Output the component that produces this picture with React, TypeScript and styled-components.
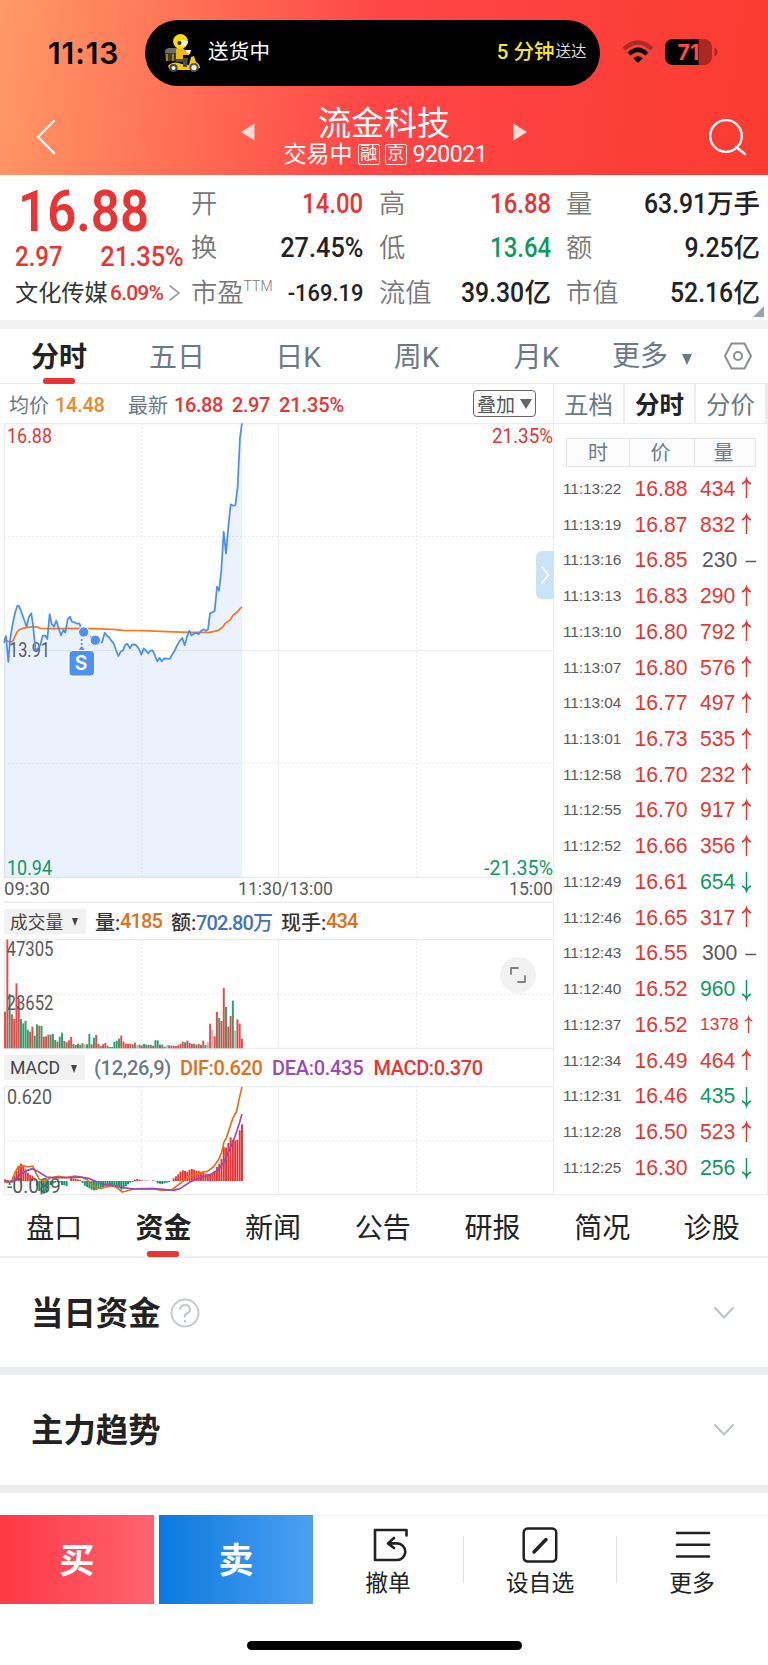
import React from "react";
import styled, { createGlobalStyle } from "styled-components";

const RED = "#ea3433";
const GREEN = "#0f9960";
const SLATE = "#6b7987";
const INK = "#222";
const GREY = "#58595b";
const ORANGE = "#e2701a";
const GRID = "#ececee";

const Global = createGlobalStyle`
  * { box-sizing: border-box; }
  body { margin: 0; background: #fff; }
`;

const Page = styled.div`
  width: 768px;
  height: 1665px;
  display: flex;
  flex-direction: column;
  background: #fff;
  color: ${INK};
  font-family: Roboto, "Noto Sans CJK SC", sans-serif;
  overflow: hidden;
  white-space: nowrap;
  svg { display: block; flex: none; overflow: visible; }
`;

/* ---------- header ---------- */

const Header = styled.header`
  height: 175px;
  flex: none;
  background: linear-gradient(98deg, #ff9a66 0%, #ff4546 49%, #fa3b31 100%);
`;

const StatusBar = styled.div`
  height: 106px;
  padding: 20px 49px 20px 48px;
  display: flex;
  align-items: center;
`;

const Clock = styled.div`
  width: 97px;
  color: #000;
  font: 600 30px Inter, sans-serif;
  letter-spacing: 0.9px;
`;

const Island = styled.div`
  width: 454.5px;
  height: 66px;
  padding: 0 13px 0 19px;
  display: flex;
  align-items: center;
  border-radius: 33px;
  background: #000;
  color: #fff;
  font-size: 20.5px;
  line-height: 30px;
`;

const IslandLabel = styled.span`
  margin: -2px 0 0 7px;
  flex: 1;
  letter-spacing: 0.3px;
`;

const Eta = styled.span`
  margin-top: -2px;
  color: #f8e71c;
  font-weight: 500;
`;

const EtaNote = styled.span`
  margin: -2px 0 0 1px;
  font-size: 15.5px;
  color: #ddd;
`;

const StatusIcons = styled.div`
  display: flex;
  align-items: center;
  gap: 11px;
  margin-left: 22.5px;
  margin-top: -3px;
`;

const NavBar = styled.div`
  height: 60px;
  padding: 0 20px 0 36px;
  display: grid;
  grid-template-columns: 60px 1fr 60px;
  align-items: center;
  color: #fff;
`;

const NavTitle = styled.div`
  display: grid;
  grid-template-columns: 14px 246px 14px;
  justify-content: center;
  gap: 6px;
  margin-left: -16px;
`;

const StockName = styled.div`
  font-size: 33px;
  font-weight: 400;
  line-height: 36px;
  text-align: center;
`;

const StockMeta = styled.div`
  height: 25px;
  padding-left: 2px;
  display: flex;
  justify-content: center;
  align-items: center;
  font-size: 23px;
  line-height: 25px;
`;

const Tag = styled.span`
  width: 21.5px;
  height: 21px;
  margin-left: 5.5px;
  border: 1.5px solid rgba(255, 255, 255, 0.85);
  border-radius: 2px;
  font-size: 17px;
  line-height: 17px;
  text-align: center;
`;

const Code = styled.span`
  width: 74px;
  margin-left: 6px;
  font-size: 23px;
  letter-spacing: -0.5px;
`;

/* ---------- quote ---------- */

const Quote = styled.section`
  height: 145px;
  flex: none;
  position: relative;
  display: grid;
  grid-template-columns: 191px 172px 16px 172px 15px 194px;
`;

const Condensed = styled.span<{ $scale?: number; $from?: string }>`
  display: inline-block;
  transform: scaleX(${(p) => p.$scale ?? 0.87});
  transform-origin: ${(p) => p.$from ?? "right"} center;
`;

const PriceColumn = styled.div`
  padding: 0 0 0 15px;
  color: ${RED};
  font-weight: 500;
`;

const BigPrice = styled.div`
  height: 62px;
  margin-top: 5px;
  padding-left: 3px;
  font-size: 58px;
  font-weight: 600;
  line-height: 62px;
`;

const Change = styled.div`
  height: 32px;
  width: 168.5px;
  display: flex;
  justify-content: space-between;
  align-items: center;
  font-size: 27px;
  line-height: 32px;
  margin-top: -1px;
`;

const Sector = styled.div`
  height: 30px;
  margin-top: 5px;
  display: flex;
  align-items: center;
  font-size: 21px;
  line-height: 30px;
`;

const SectorName = styled.span`
  width: 95px;
  color: #333;
  font-size: 23.2px;
  font-weight: 400;
`;

const SectorRate = styled.span`
  width: 59px;
  letter-spacing: -0.8px;
`;

const StatColumn = styled.div<{ $start: number }>`
  grid-column: ${(p) => p.$start};
  padding-top: 6.5px;
`;

const Stat = styled.div`
  height: 44.5px;
  display: flex;
  justify-content: space-between;
  align-items: center;
  font-size: 26px;
  line-height: 44px;
`;

const StatLabel = styled.span`
  color: #777;
  font-weight: 350;
  font-size: 26.3px;
  sup {
    font-size: 14px;
    line-height: 0;
    vertical-align: 11px;
  }
`;

const StatValue = styled.span<{ $color?: string; $size?: number }>`
  color: ${(p) => p.$color ?? INK};
  font-weight: 500;
  font-size: ${(p) => p.$size ?? 27.5}px;
  display: flex;
`;

const Unit = styled.span`
  font-size: 26.5px;
`;

const CornerMark = styled.i`
  position: absolute;
  right: 4px;
  bottom: 3px;
  border-left: 11px solid transparent;
  border-bottom: 11px solid #97a3b0;
`;

const Band = styled.div<{ $h: number; $c?: string }>`
  height: ${(p) => p.$h}px;
  flex: none;
  background: ${(p) => p.$c ?? "#f2f2f2"};
`;

/* ---------- period tabs ---------- */

const PeriodTabs = styled.nav`
  height: 55px;
  flex: none;
  display: flex;
  align-items: center;
  border-bottom: 1.5px solid #e9ebec;
  font-size: 28px;
  color: ${SLATE};
`;

const PeriodTab = styled.div<{ $w: number; $on?: boolean }>`
  width: ${(p) => p.$w}px;
  height: 54px;
  display: flex;
  flex-direction: column;
  align-items: center;
  line-height: 58px;
  color: ${(p) => (p.$on ? INK : SLATE)};
  font-weight: ${(p) => (p.$on ? 700 : 400)};
  i { margin-top: -9px; }
`;

const Marker = styled.i`
  width: 32px;
  height: 6px;
  flex: none;
  border-radius: 2.5px;
  background: ${RED};
`;

const MoreTab = styled.div`
  width: 124px;
  height: 54px;
  padding: 1px 0 0 12px;
  display: flex;
  align-items: center;
  gap: 14px;
  line-height: 57px;
  i { margin-top: 5px; }
`;

const Caret = styled.i<{ $w: number; $h: number; $c?: string }>`
  border: ${(p) => p.$w / 2}px solid transparent;
  border-bottom: 0;
  border-top: ${(p) => p.$h}px solid ${(p) => p.$c ?? SLATE};
`;

/* ---------- market area ---------- */

const Market = styled.main`
  height: 811px;
  flex: none;
  display: flex;
`;

const ChartPane = styled.section`
  width: 554px;
  position: relative;
  border-right: 1.5px solid ${GRID};
`;

const InfoRow = styled.div<{ $h: number; $drop?: number }>`
  height: ${(p) => p.$h}px;
  padding-top: ${(p) => p.$drop ?? 0}px;
  display: flex;
  align-items: center;
  font-size: 20px;
  font-weight: 500;
`;

const Seg = styled.span<{ $w: number; $c?: string; $weight?: number; $ls?: number }>`
  width: ${(p) => p.$w}px;
  color: ${(p) => p.$c ?? "#333"};
  font-weight: ${(p) => p.$weight ?? 500};
  letter-spacing: ${(p) => p.$ls ?? 0}px;
`;

const OverlayButton = styled.div`
  width: 63px;
  height: 27px;
  margin: -2px 17px 0 auto;
  display: flex;
  align-items: center;
  justify-content: center;
  gap: 5px;
  border: 1.5px solid #666;
  border-radius: 4px;
  color: #555;
  font-size: 19px;
  font-weight: 400;
`;

const Picker = styled.div<{ $w: number }>`
  width: ${(p) => p.$w}px;
  height: 25px;
  margin: 0 9px 0 4px;
  padding: 0 8px 0 6px;
  display: flex;
  align-items: center;
  justify-content: space-between;
  background: #f2f2f2;
  color: #444;
  font-size: 17.7px;
  font-weight: 400;
  i { margin-top: 2px; }
`;

const CollapseHandle = styled.div`
  position: absolute;
  left: 536px;
  top: 167px;
  width: 18px;
  height: 48px;
  display: flex;
  align-items: center;
  justify-content: center;
  border-radius: 6px 0 0 6px;
  background: #cbe2f8;
`;

const ExpandButton = styled.div`
  position: absolute;
  left: 500px;
  top: 573px;
  width: 36px;
  height: 36px;
  display: flex;
  align-items: center;
  justify-content: center;
  border-radius: 50%;
  background: #f2f2f2;
`;

/* ---------- tick pane ---------- */

const TickPane = styled.aside`
  width: 214px;
  border-right: 1.5px solid ${GRID};
  border-bottom: 1.5px solid ${GRID};
`;

const TickTabs = styled.div`
  height: 40px;
  display: grid;
  grid-template-columns: 71px 71px 71px;
  border-bottom: 1.5px solid ${GRID};
`;

const TickTab = styled.div<{ $on?: boolean }>`
  border-right: 2px solid ${GRID};
  font-size: 24.5px;
  line-height: 44px;
  height: 39px;
  text-align: center;
  color: ${(p) => (p.$on ? INK : SLATE)};
  font-weight: ${(p) => (p.$on ? 700 : 400)};
`;

const TickHead = styled.div`
  width: 190px;
  height: 29px;
  margin: 14px 0 4px 12px;
  display: grid;
  grid-template-columns: 62px 65px 1fr;
  border: 1px solid #e2e4e6;
  background: #fcfcfd;
  color: ${SLATE};
  font-size: 20px;
  line-height: 28px;
  text-align: center;
  span { padding-right: 3px; height: 27px; }
  span:first-child { padding: 0; }
  span + span { border-left: 1.5px solid #e2e4e6; }
`;

const TickRow = styled.div`
  height: 35.74px;
  padding-left: 9px;
  display: grid;
  grid-template-columns: 71.5px 65.5px 1fr;
  align-items: center;
  font-family: "Liberation Sans", sans-serif;
  font-size: 21.2px;
  color: ${RED};
`;

const TickTime = styled.span`
  color: ${GREY};
  font-size: 15.4px;
  letter-spacing: -0.05px;
`;

const TickVolume = styled.span<{ $dir: Dir; $small: boolean }>`
  display: flex;
  align-items: center;
  gap: ${(p) => (p.$small ? 5 : 6)}px;
  padding-left: ${(p) => (p.$dir === "flat" ? 2 : 0)}px;
  font-size: ${(p) => (p.$small ? 17.4 : 21.2)}px;
  color: ${(p) => (p.$dir === "up" ? RED : p.$dir === "down" ? GREEN : GREY)};
`;

/* ---------- lower sections ---------- */

const DetailTabs = styled.nav`
  height: 63px;
  flex: none;
  display: grid;
  grid-template-columns: 108.6px repeat(6, 109.7px);
  border-bottom: 2px solid #eff0f1;
`;

const DetailTab = styled.div<{ $on?: boolean }>`
  height: 62px;
  display: flex;
  flex-direction: column;
  align-items: center;
  font-size: 28px;
  line-height: 68px;
  font-weight: ${(p) => (p.$on ? 600 : 400)};
  i { margin-top: -12px; }
`;

const Fold = styled.section<{ $h: number }>`
  height: ${(p) => p.$h}px;
  flex: none;
  padding: 0 34px 0 31px;
  display: flex;
  align-items: center;
  justify-content: space-between;
`;

const FoldTitle = styled.h2`
  margin: 0;
  display: flex;
  align-items: center;
  gap: 9px;
  font-size: 32.4px;
  font-weight: 700;
  span { margin-top: -5px; }
`;

const ActionBar = styled.footer`
  height: 90px;
  flex: none;
  margin-top: 22px;
  display: flex;
  border-top: 1px solid #f4f4f5;
`;

const Trade = styled.button<{ $from: string; $to: string }>`
  width: 154px;
  height: 89px;
  margin: -1px 5px 0 0;
  padding: 0 0 4px;
  border: 0;
  background: linear-gradient(90deg, ${(p) => p.$from}, ${(p) => p.$to});
  color: #fff;
  font: 700 35px "Noto Sans CJK SC", sans-serif;
`;

const Action = styled.div<{ $w: number; $nudge?: number }>`
  width: ${(p) => p.$w}px;
  padding-top: 11px;
  display: flex;
  flex-direction: column;
  align-items: center;
  font-size: 22.8px;
  line-height: 38px;
  span { margin-left: ${(p) => p.$nudge ?? 0}px; }
`;

const Divider = styled.i`
  width: 1px;
  height: 47px;
  margin-top: 20px;
  background: #dfe0e2;
`;

const HomeIndicator = styled.div`
  width: 275px;
  height: 9px;
  flex: none;
  margin: 36px auto 0;
  border-radius: 5px;
  background: #000;
`;

/* ---------- data ---------- */

type Dir = "up" | "down" | "flat";

const ticks: [string, string, string, Dir][] = [
  ["11:13:22", "16.88", "434", "up"],
  ["11:13:19", "16.87", "832", "up"],
  ["11:13:16", "16.85", "230", "flat"],
  ["11:13:13", "16.83", "290", "up"],
  ["11:13:10", "16.80", "792", "up"],
  ["11:13:07", "16.80", "576", "up"],
  ["11:13:04", "16.77", "497", "up"],
  ["11:13:01", "16.73", "535", "up"],
  ["11:12:58", "16.70", "232", "up"],
  ["11:12:55", "16.70", "917", "up"],
  ["11:12:52", "16.66", "356", "up"],
  ["11:12:49", "16.61", "654", "down"],
  ["11:12:46", "16.65", "317", "up"],
  ["11:12:43", "16.55", "300", "flat"],
  ["11:12:40", "16.52", "960", "down"],
  ["11:12:37", "16.52", "1378", "up"],
  ["11:12:34", "16.49", "464", "up"],
  ["11:12:31", "16.46", "435", "down"],
  ["11:12:28", "16.50", "523", "up"],
  ["11:12:25", "16.30", "256", "down"],
];

const priceA =
  "12,788 18,768 25,846 30,780 38,732 46,695 52,677 57,678 65,698 72,718 80,741 86,712 94,700 99,735 103,775 107,812 114,805 121,795 128,767 136,767 142,777 149,702 155,732 162,740 169,722 176,745 183,766 190,750 196,758 203,718 210,710 216,726 223,726 230,731 238,730 242,740";
const priceB =
  "306,788 314,758 320,766 327,772 334,782 341,790 348,810 355,828 362,815 369,811 376,794 382,791 390,805 396,794 404,793 410,797 417,807 424,824 431,805 438,812 445,820 451,812 458,811 465,827 472,844 479,833 485,844 493,835 500,836 509,837 516,825 524,812 531,797 538,784 547,774 554,796 561,770 568,752 574,766 581,762 588,758 596,763 603,753 610,748 618,752 624,748 630,700 637,697 644,693 651,620 657,632 664,572 671,455 678,521 685,440 692,373 699,377 706,376 713,320 720,172 726,130";
const average =
  "12,776 18,780 25,785 38,785 50,758 57,750 65,746 80,743 100,740 112,741 122,745 150,746 250,745 340,748 370,751 430,752 500,755 570,757 630,757 655,751 668,742 676,730 690,720 700,705 712,696 720,686 726,681";

const volume =
  "r110 r326 g163 r102 r88 r195 r150 g88 g75 g82 g56 r50 r65 g38 g72 r68 g67 r35 r36 g41 r41 g43 g25 r20 g35 g47 r22 g18 r24 r34 g13 r10 g14 g11 r15 n12 g12 g43 r12 g32 r40 r13 g7 r12 r16 g8 g4 g4 g19 g23 g29 r38 r20 r13 r13 r14 g12 r17 n10 g11 r9 g13 g11 r10 g10 r8 g24 g24 r11 g11 r5 n10 g9 r8 r8 r7 r9 r13 r20 g18 r23 r16 r13 g14 r11 r13 g10 r23 g10 n18 r74 n55 r36 r109 g91 r82 r181 g124 r65 r97 g143 n53 r87 r74 r29"
    .split(" ")
    .map((v) => ({ kind: v[0], size: Number(v.slice(1)) }));

const macd = [
  5, 3, -12, -5, 15, 30, 45, 52, 46, 35, 25, 18, 16, 2, -15, -30, -40, -38, -30, -22, -12, -8, -5, -3, -5, -12, -12,
  -15, 0, 9, 8, 7, 5, 3, -6, -14, -18, -22, -26, -28, -27, -24, -20, -18, -15, -13, -12, -11, -12, -14, -20, -26, -24,
  -16, -10, -5, -3, 4, 6, 4, 2, 1, 1, 1, 0, 2, -1, -7, -8, -9, -7, -5, -3, 0, 8, 14, 20, 28, 32, 30, 28, 34, 36, 34,
  31, 30, 26, 24, 22, 20, 18, 24, 30, 42, 52, 66, 102, 100, 114, 131, 124, 122, 124, 152, 170,
];
const dif =
  "12,754 25,757 35,752 45,728 55,710 70,707 82,711 98,708 107,728 118,748 135,754 150,744 175,739 200,743 225,738 245,741 262,750 275,762 290,774 305,775 320,770 340,768 352,774 367,786 380,783 400,777 430,776 460,776 485,781 515,780 530,768 545,757 565,740 585,733 605,727 622,724 640,711 655,690 665,668 672,636 680,622 690,590 698,566 710,543 718,505 726,471";
const dea =
  "12,754 40,754 60,733 80,722 98,716 115,725 140,741 160,743 200,743 240,741 265,745 290,755 310,763 340,766 370,773 400,777 460,776 490,778 520,781 540,776 570,756 600,744 630,734 655,720 672,697 690,656 705,620 718,580 726,553";

/* ---------- chart drawings ---------- */

const barColor: Record<string, string> = { r: RED, g: GREEN, n: "#b0b0b0" };

function Label(p: { x: number; y: number; w: number; size?: number; fill?: string; children: string }) {
  return (
    <text x={p.x} y={p.y} textLength={p.w} lengthAdjust="spacingAndGlyphs" fontSize={p.size ?? 20} fill={p.fill ?? GREY}>
      {p.children}
    </text>
  );
}

function Grid({ h, rows }: { h: number; rows: [number, boolean][] }) {
  return (
    <g stroke={GRID} strokeWidth="1.2" fill="none">
      <path d={`M4 .7H553M4 ${h - 0.7}H553M4.5 0V${h}M278.5 0V${h}`} />
      <path d={`M141.5 0V${h}M416.5 0V${h}`} strokeDasharray="2 2" />
      {rows.map(([y, dotted]) => (
        <path key={y} d={`M4 ${y}H553`} strokeDasharray={dotted ? "2 2" : undefined} />
      ))}
    </g>
  );
}

function PriceChart() {
  return (
    <svg width="553" height="455" viewBox="0 0 553 455">
      <Grid h={455} rows={[[113.5, true], [227.5, false], [340.5, true]]} />
      <g transform="translate(0 -43) scale(.33333)">
        <polygon points={`12,1493 ${priceA} 251,755 286,780 ${priceB} 726,1493`} fill="#3f82f3" fillOpacity=".1" />
      </g>
      <Label x={9} y={234} w={41}>13.91</Label>
      <g transform="translate(0 -43) scale(.33333)" fill="none" strokeLinejoin="round" strokeWidth="5.2">
        <polyline points={average} stroke="#f47a1c" />
        <polyline points={priceA} stroke="#4a8df8" />
        <polyline points={priceB} stroke="#4a8df8" />
        <path d="M251 755L286 780L306 788M245 765V808" stroke="#4a8df8" strokeDasharray="6 6" />
      </g>
      <g fill="#4f90f3" stroke="#fff" strokeWidth="1">
        <circle cx="83.7" cy="209" r="5.2" />
        <circle cx="95.3" cy="217.2" r="5.2" />
        <path d="M78 228l3.7-5l3.7 5z" stroke="none" />
        <rect x="69" y="227.5" width="25.5" height="25.5" rx="3.5" />
      </g>
      <text x="81.2" y="246.5" textAnchor="middle" fontFamily="Inter, sans-serif" fontSize="19.5" fontWeight="600" fill="#fff">S</text>
      <Label x={7} y={19.5} w={45} fill={RED}>16.88</Label>
      <Label x={492} y={19.5} w={61} fill={RED}>21.35%</Label>
      <Label x={7} y={451.5} w={45} fill={GREEN}>10.94</Label>
      <Label x={484} y={451.5} w={69} fill={GREEN}>-21.35%</Label>
    </svg>
  );
}

function TimeAxis() {
  return (
    <svg width="553" height="25" viewBox="0 0 553 25">
      <Label x={4} y={16.5} w={46} size={18.5}>09:30</Label>
      <Label x={238} y={16.5} w={95} size={18.5}>11:30/13:00</Label>
      <Label x={509} y={16.5} w={44} size={18.5}>15:00</Label>
      <path d="M4 24.3H553" stroke={GRID} strokeWidth="1.3" />
    </svg>
  );
}

function VolumeChart() {
  return (
    <svg width="553" height="110" viewBox="0 0 553 110">
      <Grid h={110} rows={[[55, true]]} />
      {volume.map((v, i) => (
        <rect key={i} x={4.1 + i * 2.278} y={109.3 - v.size / 3} width="1.95" height={v.size / 3} fill={barColor[v.kind]} fillOpacity=".9" />
      ))}
      <Label x={6.5} y={16.5} w={47}>47305</Label>
      <Label x={6.5} y={71} w={47}>23652</Label>
    </svg>
  );
}

function MacdChart() {
  return (
    <svg width="553" height="109" viewBox="0 0 553 109">
      <Grid h={109} rows={[[54.5, true]]} />
      {macd.map((v, i) => (
        <rect key={i} x={4.1 + i * 2.278} y={v > 0 ? 95 - v / 3 : 95} width="1.95" height={Math.abs(v) / 3} fill={v > 0 ? RED : GREEN} />
      ))}
      <Label x={7} y={17.5} w={45}>0.620</Label>
      <Label x={7} y={107} w={54}>-0.089</Label>
      <g transform="translate(0 -156) scale(.33333)" fill="none" strokeWidth="5" strokeLinejoin="round">
        <polyline points={dif} stroke={ORANGE} />
        <polyline points={dea} stroke="#9b48b8" />
      </g>
    </svg>
  );
}

/* ---------- icons ---------- */

const Rider = () => (
  <svg width="37" height="39" viewBox="0 0 37 39">
    <path d="M1 16l3-2h9l1 13H2z" fill="#6b6b6b" />
    <path d="M1 19h12v8H2z" fill="#3d3a30" />
    <path d="M3 20v7M9 20v7" stroke="#d9b41c" strokeWidth="1.2" />
    <path d="M4 32q5-6 14-2l7 1 2-8 3-1 2 6q4 2 4 6l-7 2H6z" fill="#f6c80e" />
    <path d="M12 24h12l-1 9h-4l0-5h-7z" fill="#4a4a4a" />
    <path d="M12 15q5-3 9 1l5 2-1 3-6 0 0 4h-7z" fill="#f0b90e" />
    <path d="M22 16l5 0-1 4-3-1z" fill="#fff" />
    <circle cx="16.500" cy="7.500" r="7.400" fill="#f8d917" />
    <path d="M16 7.500q2-3 8 0l-1 3q-3 3-7 1z" fill="#f4efe0" />
    <circle cx="15.500" cy="9" r="2" fill="#332b10" />
    <circle cx="9.500" cy="34" r="4" fill="#444" />
    <circle cx="9.500" cy="34" r="2" fill="#eee" />
    <circle cx="30" cy="33.500" r="4.600" fill="#555" />
    <circle cx="30" cy="33.500" r="2.600" fill="#f2f2f2" />
  </svg>
);

const Wifi = () => (
  <svg width="32" height="24" viewBox="0 0 32 24" fill="none">
    <path d="M2 9Q16-4 30 9" stroke="#7d211e" strokeOpacity=".65" strokeWidth="4.200" />
    <path d="M7 14Q16 5.500 25 14" stroke="#000" strokeWidth="4.200" />
    <path d="M11.300 18.300Q16 14 20.700 18.300L16 23z" fill="#000" />
  </svg>
);

const Battery = () => (
  <svg width="53" height="26" viewBox="0 0 53 26">
    <rect width="47" height="26" rx="8" fill="#a92824" />
    <path d="M8 0H33.500V26H8A8 8 0 0 1 0 18V8A8 8 0 0 1 8 0z" fill="#000" />
    <path d="M49.500 8.500q3 1 3 4.500t-3 4.500z" fill="#a92824" />
    <text x="23.500" y="20.500" textAnchor="middle" fontFamily="Inter, sans-serif" fontSize="21.500" fontWeight="700" fill="#ff4a45">71</text>
  </svg>
);

const Stroke = (p: { w: number; h: number; d: string; c: string; sw?: number; children?: React.ReactNode }) => (
  <svg width={p.w} height={p.h} viewBox={`0 0 ${p.w} ${p.h}`} fill="none" stroke={p.c} strokeWidth={p.sw ?? 2} strokeLinecap="round" strokeLinejoin="round">
    <path d={p.d} />
    {p.children}
  </svg>
);

const NavTriangle = ({ d }: { d: string }) => (
  <svg width="14" height="18" viewBox="0 0 14 18" fill="#ffdcd8">
    <path d={d} />
  </svg>
);

const NavArrow = styled.div`
  padding-top: 17px;
`;

const arrowPath: Record<Dir, string> = {
  up: "M5.500 20V1M1 6Q4.500 4.500 5.500 1Q6.500 4.500 10 6",
  down: "M5.500 1V20M1 15Q4.500 16.500 5.500 20Q6.500 16.500 10 15",
  flat: "M2.500 11.500H13",
};

const DirectionMark = ({ dir, small }: { dir: Dir; small: boolean }) => (
  <svg width={small ? 10 : 14} height={small ? 18 : 21} viewBox={small ? "0 0 12 21" : "0 0 14 21"} fill="none" stroke="currentColor" strokeWidth="1.500">
    <path d={arrowPath[dir]} />
  </svg>
);

/* ---------- page ---------- */

const stats: { label: React.ReactNode; num: string; unit?: string; color?: string; size?: number; scale?: number }[][] = [
  [
    { label: "开", num: "14.00", color: RED },
    { label: "换", num: "27.45%", scale: 0.92 },
    { label: <>市盈<sup>TTM</sup></>, num: "-169.19", size: 23.5, scale: 0.93 },
  ],
  [
    { label: "高", num: "16.88", color: RED },
    { label: "低", num: "13.64", color: GREEN },
    { label: "流值", num: "39.30", unit: "亿", scale: 0.9 },
  ],
  [
    { label: "量", num: "63.91", unit: "万手", scale: 0.9 },
    { label: "额", num: "9.25", unit: "亿", scale: 0.9 },
    { label: "市值", num: "52.16", unit: "亿", scale: 0.9 },
  ],
];

export default function App() {
  return (
    <Page>
      <Global />
      <Header>
        <StatusBar>
          <Clock>11:13</Clock>
          <Island>
            <Rider />
            <IslandLabel>送货中</IslandLabel>
            <Eta>5 分钟</Eta>
            <EtaNote>送达</EtaNote>
          </Island>
          <StatusIcons>
            <Wifi />
            <Battery />
          </StatusIcons>
        </StatusBar>
        <NavBar>
          <Stroke w={20} h={36} d="M18 2L2 18L18 34" c="#fff" sw={2.2} />
          <NavTitle>
            <NavArrow><NavTriangle d="M0 9L13.500 .5V17.500z" /></NavArrow>
            <div>
              <StockName>流金科技</StockName>
              <StockMeta>
                交易中<Tag>融</Tag><Tag>京</Tag><Code>920021</Code>
              </StockMeta>
            </div>
            <NavArrow><NavTriangle d="M14 9L.5 .5V17.500z" /></NavArrow>
          </NavTitle>
          <Stroke w={60} h={38} d="M48 29L57 36" c="#fff" sw={2.3}>
            <circle cx="38" cy="18" r="15.800" />
          </Stroke>
        </NavBar>
      </Header>

      <Quote>
        <PriceColumn>
          <BigPrice><Condensed $from="left" $scale={0.88}>16.88</Condensed></BigPrice>
          <Change>
            <Condensed $from="left" $scale={0.89}>2.97</Condensed>
            <Condensed $scale={0.94}>21.35%</Condensed>
          </Change>
          <Sector>
            <SectorName>文化传媒</SectorName>
            <SectorRate>6.09%</SectorRate>
            <Stroke w={11} h={16} d="M1 1L10 8L1 15" c="#9aa3ad" sw={1.7} />
          </Sector>
        </PriceColumn>
        {stats.map((column, c) => (
          <StatColumn key={c} $start={c * 2 + 2}>
            {column.map((s) => (
              <Stat key={s.num}>
                <StatLabel>{s.label}</StatLabel>
                <StatValue $color={s.color} $size={s.size}>
                  <Condensed $scale={s.scale}>{s.num}</Condensed>
                  {s.unit && <Unit>{s.unit}</Unit>}
                </StatValue>
              </Stat>
            ))}
          </StatColumn>
        ))}
        <CornerMark />
      </Quote>
      <Band $h={9} />

      <PeriodTabs>
        <PeriodTab $w={118} $on>分时<Marker /></PeriodTab>
        <PeriodTab $w={118}>五日</PeriodTab>
        <PeriodTab $w={124}>日K</PeriodTab>
        <PeriodTab $w={113}>周K</PeriodTab>
        <PeriodTab $w={127}>月K</PeriodTab>
        <MoreTab>更多<Caret $w={11} $h={11} /></MoreTab>
        <Stroke w={28} h={28} d="M7.500 1.500H20.500L27 14L20.500 26.500H7.500L1 14z" c="#8b8f94" sw={2}>
          <circle cx="14" cy="14" r="4" />
        </Stroke>
      </PeriodTabs>

      <Market>
        <ChartPane>
          <InfoRow $h={39} $drop={2}>
            <Seg $w={9} />
            <Seg $w={46} $c={SLATE} $weight={400}>均价</Seg>
            <Seg $w={73} $c="#e8892d" $ls={-0.3}>14.48</Seg>
            <Seg $w={46} $c={SLATE} $weight={400}>最新</Seg>
            <Seg $w={58} $c={RED} $ls={-0.4}>16.88</Seg>
            <Seg $w={47} $c={RED} $ls={-0.4}>2.97</Seg>
            <Seg $w={66} $c={RED} $ls={-0.1}>21.35%</Seg>
            <OverlayButton>叠加<Caret $w={12} $h={10} $c="#666" /></OverlayButton>
          </InfoRow>
          <PriceChart />
          <TimeAxis />
          <InfoRow $h={36}>
            <Picker $w={82}>成交量<Caret $w={7} $h={8} $c="#444" /></Picker>
            <Seg $w={25}>量:</Seg>
            <Seg $w={51} $c={ORANGE} $ls={-0.9}>4185</Seg>
            <Seg $w={25}>额:</Seg>
            <Seg $w={85} $c="#456fc0" $ls={-0.9}>702.80万</Seg>
            <Seg $w={45}>现手:</Seg>
            <Seg $w={40} $c={ORANGE} $ls={-0.9}>434</Seg>
          </InfoRow>
          <VolumeChart />
          <InfoRow $h={37}>
            <Picker $w={81}>MACD<Caret $w={7} $h={8} $c="#444" /></Picker>
            <Seg $w={86} $c={SLATE} $weight={500} $ls={-0.3}>(12,26,9)</Seg>
            <Seg $w={92} $c={ORANGE} $ls={-0.4}>DIF:0.620</Seg>
            <Seg $w={101.5} $c="#9b48b8" $ls={-0.3}>DEA:0.435</Seg>
            <Seg $w={112} $c={RED} $ls={-0.4}>MACD:0.370</Seg>
          </InfoRow>
          <MacdChart />
          <CollapseHandle>
            <Stroke w={9} h={18} d="M1 1L7.500 9L1 17" c="#fff" sw={1.8} />
          </CollapseHandle>
          <ExpandButton>
            <Stroke w={16} h={16} d="M1 7V1H8M15 9V15H8" c="#808080" sw={1.8} />
          </ExpandButton>
        </ChartPane>

        <TickPane>
          <TickTabs>
            <TickTab>五档</TickTab>
            <TickTab $on>分时</TickTab>
            <TickTab>分价</TickTab>
          </TickTabs>
          <TickHead><span>时</span><span>价</span><span>量</span></TickHead>
          {ticks.map(([time, price, vol, dir]) => (
            <TickRow key={time}>
              <TickTime>{time}</TickTime>
              <span>{price}</span>
              <TickVolume $dir={dir} $small={vol.length > 3}>
                {vol}
                <DirectionMark dir={dir} small={vol.length > 3} />
              </TickVolume>
            </TickRow>
          ))}
        </TickPane>
      </Market>

      <DetailTabs>
        {["盘口", "资金", "新闻", "公告", "研报", "简况", "诊股"].map((t) => (
          <DetailTab key={t} $on={t === "资金"}>
            {t}
            {t === "资金" && <Marker />}
          </DetailTab>
        ))}
      </DetailTabs>
      <Fold $h={109}>
        <FoldTitle>
          <span>当日资金</span>
          <svg width="30" height="30" viewBox="0 0 30 30" fill="none" stroke="#c5cad0" strokeWidth="2">
            <circle cx="15" cy="15" r="13.500" />
            <path d="M10 11.500Q10.500 7 15 7T20 11.500Q20 14 17 15.500T15 19.500M15 22V24.500" strokeWidth="2.200" />
          </svg>
        </FoldTitle>
        <Stroke w={20} h={12} d="M1 1L10 10.500L19 1" c="#bcc2c9" sw={2} />
      </Fold>
      <Band $h={8} $c="#ebedee" />
      <Fold $h={110}>
        <FoldTitle><span>主力趋势</span></FoldTitle>
        <Stroke w={20} h={12} d="M1 1L10 10.500L19 1" c="#bcc2c9" sw={2} />
      </Fold>
      <Band $h={8} $c="#ebecee" />

      <ActionBar>
        <Trade $from="#ff3845" $to="#ff6370">买</Trade>
        <Trade $from="#0a79e0" $to="#4da0f0">卖</Trade>
        <Action $w={145} $nudge={-5}>
          <Stroke w={36} h={38} d="M33.500 8.500V3H2V33H24A8.300 8.300 0 0 0 24 16.400H16M21 11L15 16.400L21 21" c={INK} sw={2.6} />
          <span>撤单</span>
        </Action>
        <Divider />
        <Action $w={152}>
          <Stroke w={36} h={38} d="M12 25L24 12.500" c={INK} sw={3.4}>
            <rect x="1.700" y="1.500" width="32.500" height="33" rx="4" strokeWidth="2.500" />
          </Stroke>
          <span>设自选</span>
        </Action>
        <Divider />
        <Action $w={151} $nudge={-1}>
          <Stroke w={36} h={38} d="M2 6H34M2 17.700H34M2 29.500H34" c={INK} sw={2.6} />
          <span>更多</span>
        </Action>
      </ActionBar>
      <HomeIndicator />
    </Page>
  );
}
